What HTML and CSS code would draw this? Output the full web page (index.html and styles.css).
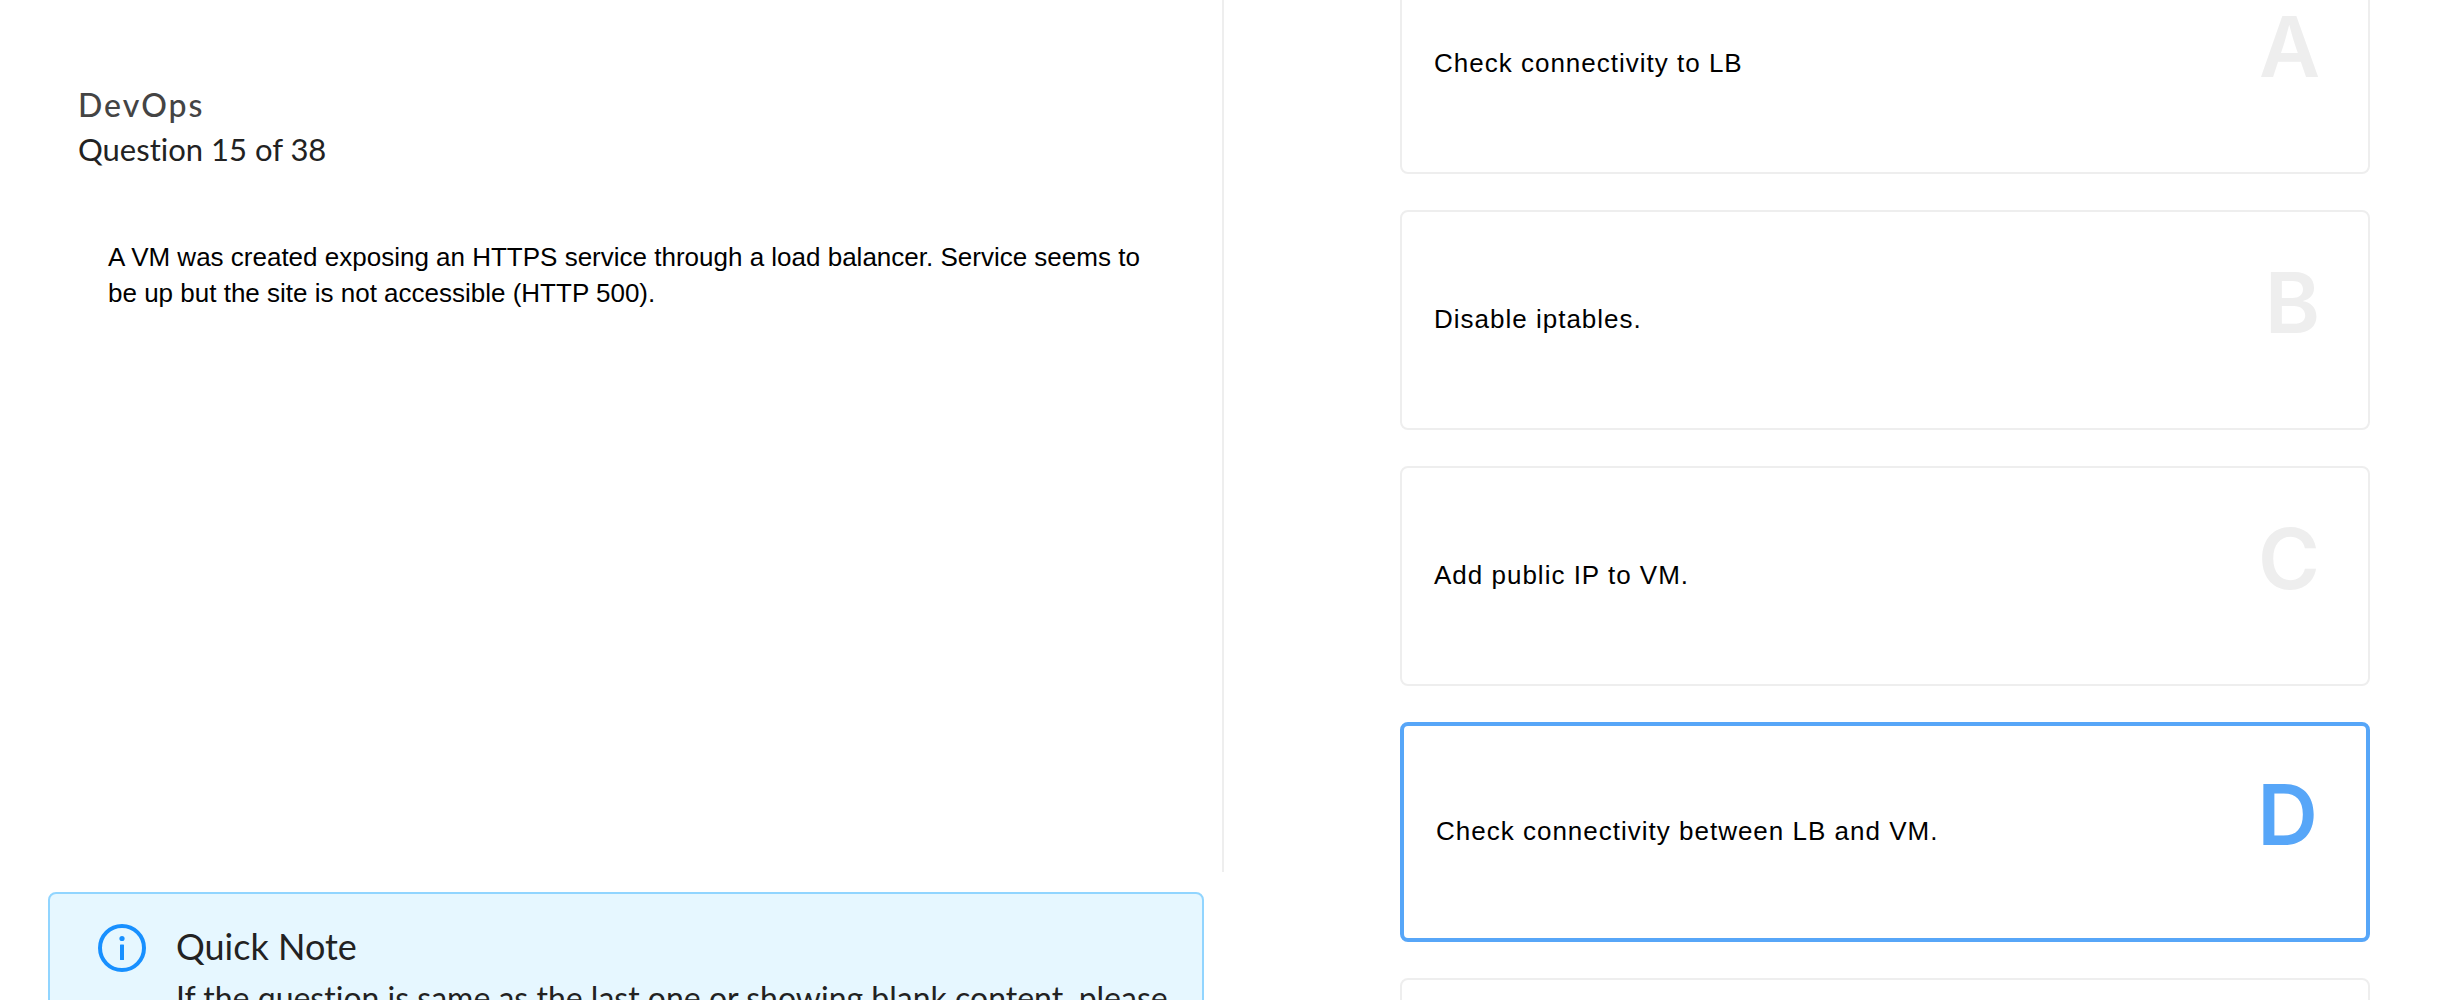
FILE: index.html
```html
<!DOCTYPE html>
<html lang="en">
<head>
<meta charset="utf-8">
<title>DevOps – Question 15 of 38</title>
<link rel="stylesheet" href="styles.css">
</head>
<body>
<main class="quiz">
  <div class="question-column">
    <section class="question-panel">
      <h1 class="topic">DevOps</h1>
      <p class="progress">Question 15 of 38</p>
      <p class="question" id="question">A VM was created exposing an HTTPS service through a load balancer. Service seems to be up but the site is not accessible (HTTP 500).</p>
    </section>
    <aside class="note">
      <svg class="note-icon" viewBox="0 0 48 48" aria-hidden="true">
        <circle cx="24" cy="24" r="22" fill="none" stroke="currentColor" stroke-width="4"/>
        <circle cx="24" cy="14.500" r="2.600" fill="currentColor"/>
        <rect x="22" y="20.500" width="4" height="15.500" rx=".6" fill="currentColor"/>
      </svg>
      <div class="note-body">
        <h2 class="note-title">Quick Note</h2>
        <p class="note-text">If the question is same as the last one or showing blank content, please</p>
      </div>
    </aside>
  </div>
  <form class="options" role="radiogroup" aria-labelledby="question">
    <label class="option"><input class="option-input" type="radio" name="answer" value="A"><span class="option-text">Check connectivity to LB</span><span class="option-letter">A</span></label>
    <label class="option"><input class="option-input" type="radio" name="answer" value="B"><span class="option-text">Disable iptables.</span><span class="option-letter">B</span></label>
    <label class="option"><input class="option-input" type="radio" name="answer" value="C"><span class="option-text">Add public IP to VM.</span><span class="option-letter">C</span></label>
    <label class="option option-selected"><input class="option-input" type="radio" name="answer" value="D" checked><span class="option-text">Check connectivity between LB and VM.</span><span class="option-letter">D</span></label>
    <label class="option"><input class="option-input" type="radio" name="answer" value="E" aria-label="Option E"></label>
  </form>
</main>
</body>
</html>
```
FILE: styles.css
```css
* {
  box-sizing: border-box;
}

body {
  margin: 0;
  background: #fff;
  color: #222;
  font-family: Lato, sans-serif;
  font-variant-ligatures: none;
}

h1, h2, p {
  margin: 0;
}

.quiz {
  display: grid;
  grid-template-columns: minmax(0, 1224fr) minmax(0, 1226fr);
  height: 100vh;
  overflow: hidden;
}

.question-panel {
  height: calc(100vh - 128px);
  padding: 83px 80px 0 78px;
  border-right: 2px solid #eee;
}

.topic {
  color: #444;
  font-size: 32px;
  font-weight: 500;
  line-height: 44px;
  letter-spacing: 2px;
}

.progress {
  font-size: 31px;
  line-height: 44px;
}

.question {
  margin: 68px 0 0 30px;
  color: #000;
  font: 26px/36px "Liberation Sans", Arial, sans-serif;
}

.note {
  display: flex;
  gap: 30px;
  margin: 20px 20px 0 48px;
  padding: 30px 30px 30px 48px;
  border: 2px solid #91d5ff;
  border-radius: 8px;
  background: #e6f7ff;
}

.note-icon {
  flex: none;
  width: 48px;
  height: 48px;
  color: #1890ff;
}

.note-title,
.note-text {
  font-weight: 400;
  line-height: 44px;
}

.note-title {
  margin-bottom: 8px;
  font-size: 36px;
}

.note-text {
  font-size: 32px;
}

.options {
  display: flex;
  flex-direction: column;
  gap: 36px;
  margin-top: -46px;
  padding: 0 80px 0 176px;
}

.option {
  display: flex;
  flex: none;
  align-items: center;
  justify-content: space-between;
  height: 220px;
  padding: 0 48px 0 32px;
  border: 2px solid #eee;
  border-radius: 8px;
  color: #000;
  font: 26px/36px "Liberation Sans", Arial, sans-serif;
  letter-spacing: 1px;
  cursor: pointer;
}

.option-input {
  appearance: none;
  width: 0;
  height: 0;
  margin: 0;
}

.option-text {
  flex: 1;
  padding-bottom: 2px;
}

.option-letter {
  padding-bottom: 35px;
  color: #eee;
  font: 600 84px/100px Inter, sans-serif;
  letter-spacing: 0;
}

.option-selected {
  border: 4px solid #57a6f8;
}

.option-selected .option-letter {
  color: #57a6f8;
}
```
